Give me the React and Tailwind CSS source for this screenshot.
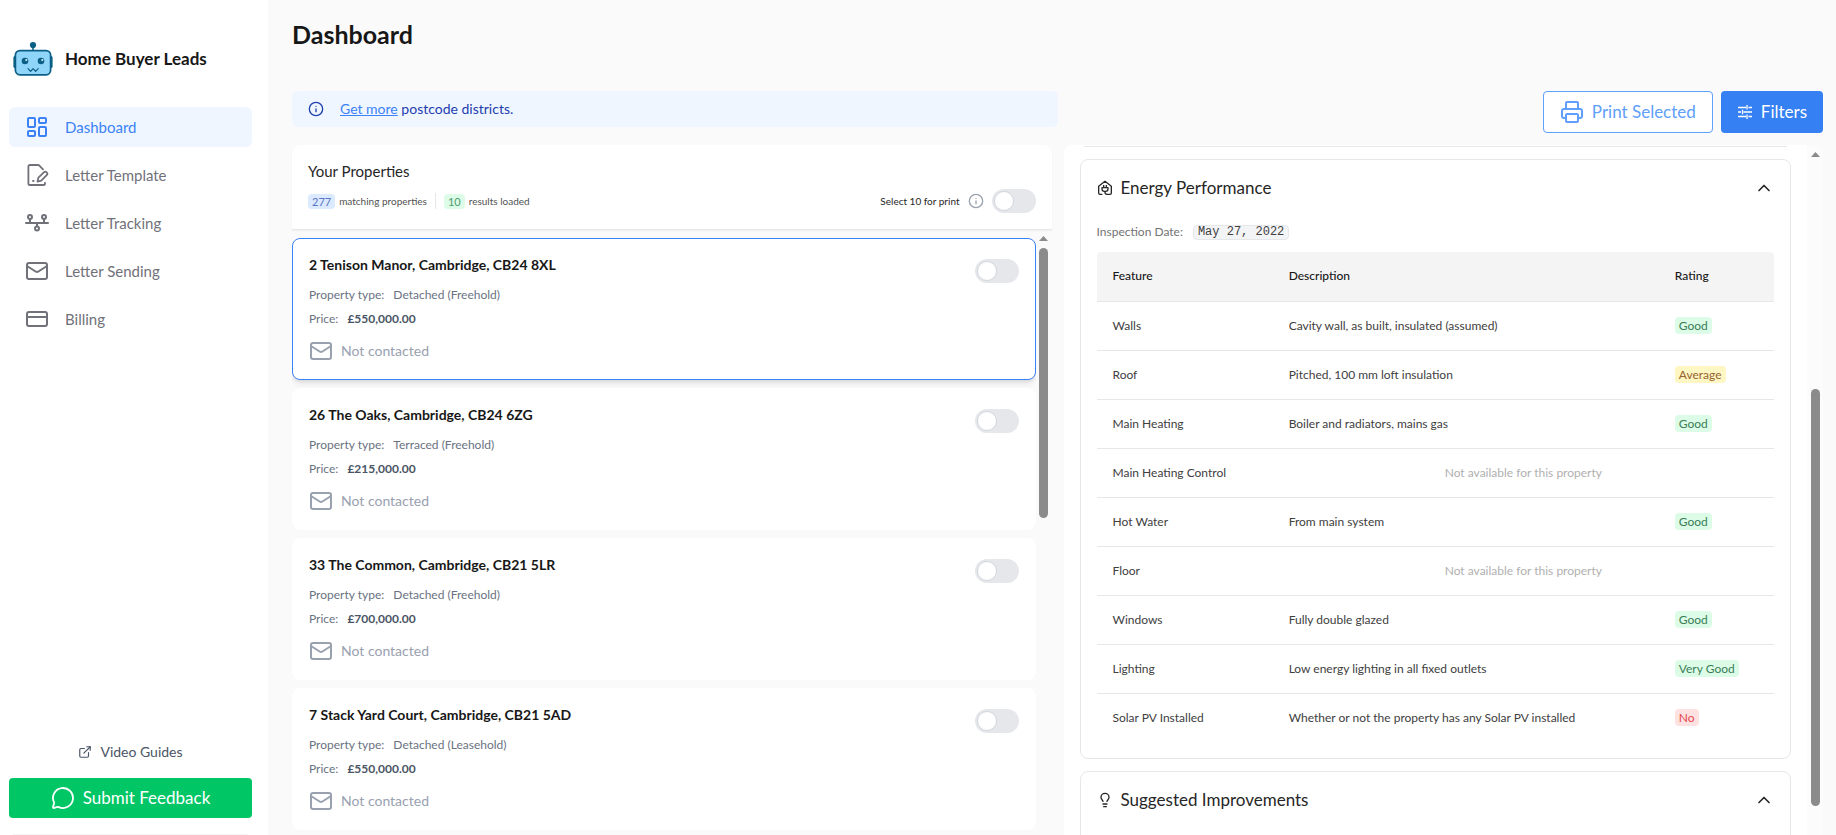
import {
  ChevronUp,
  CreditCard,
  ExternalLink,
  Info,
  LayoutDashboard,
  Lightbulb,
  Mail,
  MessageCircle,
  Printer,
} from 'lucide-react';

const properties = [
  { id: 1, address: '2 Tenison Manor, Cambridge, CB24 8XL', type: 'Detached (Freehold)', price: '£550,000.00' },
  { id: 2, address: '26 The Oaks, Cambridge, CB24 6ZG', type: 'Terraced (Freehold)', price: '£215,000.00' },
  { id: 3, address: '33 The Common, Cambridge, CB21 5LR', type: 'Detached (Freehold)', price: '£700,000.00' },
  { id: 4, address: '7 Stack Yard Court, Cambridge, CB21 5AD', type: 'Detached (Leasehold)', price: '£550,000.00' },
];

const features = [
  { name: 'Walls', description: 'Cavity wall, as built, insulated (assumed)', rating: 'Good' },
  { name: 'Roof', description: 'Pitched, 100 mm loft insulation', rating: 'Average' },
  { name: 'Main Heating', description: 'Boiler and radiators, mains gas', rating: 'Good' },
  { name: 'Main Heating Control' },
  { name: 'Hot Water', description: 'From main system', rating: 'Good' },
  { name: 'Floor' },
  { name: 'Windows', description: 'Fully double glazed', rating: 'Good' },
  { name: 'Lighting', description: 'Low energy lighting in all fixed outlets', rating: 'Very Good' },
  { name: 'Solar PV Installed', description: 'Whether or not the property has any Solar PV installed', rating: 'No' },
];

const ratingStyles = {
  Good: 'bg-[#dcfce7] text-[#3a7d57]',
  'Very Good': 'bg-[#dcfce7] text-[#3a7d57]',
  Average: 'bg-[#fef6c3] text-[#95632f]',
  No: 'bg-[#fee2e2] text-[#e5484d]',
};

function RobotLogo() {
  return (
    <svg viewBox="0 0 40 36" className="h-9 w-10" fill="none" aria-hidden="true">
      <path d="M20 4v5" stroke="#0b5f86" strokeWidth="1.6" />
      <circle cx="20" cy="4" r="3.1" fill="#0b5f86" />
      <rect x="0.4" y="15" width="4" height="12" rx="1.6" fill="#0b5f86" />
      <rect x="35.6" y="15" width="4" height="12" rx="1.6" fill="#0b5f86" />
      <rect x="2.4" y="9.6" width="35.2" height="24.2" rx="4.5" fill="#8fd4f9" stroke="#0b5f86" strokeWidth="1.7" />
      <circle cx="12" cy="20" r="3.3" fill="#0b5f86" />
      <circle cx="28" cy="20" r="3.3" fill="#0b5f86" />
      <circle cx="13.3" cy="19" r="1.1" fill="#d8f1ff" />
      <circle cx="29.3" cy="19" r="1.1" fill="#d8f1ff" />
      <path d="M15 27.6l2.6 2.7 2.5-2.7 2.5 2.7 2.6-2.7" stroke="#0b5f86" strokeWidth="1.2" strokeLinecap="round" strokeLinejoin="round" />
    </svg>
  );
}

function TemplateIcon() {
  return (
    <svg viewBox="0 0 24 24" className="size-6" fill="none" stroke="currentColor" strokeWidth="1.8" strokeLinecap="round" strokeLinejoin="round" aria-hidden="true">
      <path d="M18 6.4 14.4 2.6a2 2 0 0 0-1.4-.6H5a1.6 1.6 0 0 0-1.6 1.6v16.8A1.6 1.6 0 0 0 5 22h13.4a1.6 1.6 0 0 0 1.6-1.6v-.6" />
      <path d="m13.4 14.6 5.4-5.2a2 2 0 0 1 2.9 2.8l-5.4 5.4-3.8 1z" />
      <path d="M8 18h.6" />
    </svg>
  );
}

function TrackingIcon() {
  return (
    <svg viewBox="0 0 24 24" className="size-6" fill="none" stroke="currentColor" strokeWidth="2" strokeLinecap="round" aria-hidden="true">
      <path d="M1 12h22M5 8v4M19 8v4M12 12v3" />
      <circle cx="5" cy="6" r="2" />
      <circle cx="19" cy="6" r="2" />
      <circle cx="12" cy="17.4" r="2" />
    </svg>
  );
}

function EnergyIcon() {
  return (
    <svg viewBox="0 0 24 24" className="size-4" fill="none" stroke="currentColor" strokeWidth="2" strokeLinejoin="round" aria-hidden="true">
      <path d="M8 21.5H4.5a2 2 0 0 1-2-2V9.5L12 2l9.5 7.500v10a2 2 0 0 1-2 2H15a3 3 0 0 1-3-3V17" />
      <path d="M7.500 11.500h9v2a3.500 3.500 0 0 1-3.500 3.500h-2a3.500 3.500 0 0 1-3.500-3.500zM10 7.500v4M14 7.500v4" />
    </svg>
  );
}

function FiltersIcon() {
  return (
    <svg viewBox="0 0 16 16" className="size-4" fill="none" stroke="currentColor" strokeWidth="1.3" aria-hidden="true">
      <path d="M1 3.500h8M11.500 3.500H15M10 1v4.500M1 8h3M6.500 8H15M5.500 5.800v4.400M1 12.500h8M11.500 12.500H15M10 10.500V15" />
    </svg>
  );
}

const navItems = [
  { label: 'Dashboard', icon: LayoutDashboard, active: true },
  { label: 'Letter Template', icon: TemplateIcon },
  { label: 'Letter Tracking', icon: TrackingIcon },
  { label: 'Letter Sending', icon: Mail },
  { label: 'Billing', icon: CreditCard },
];

function Toggle({ id, label }) {
  return (
    <input
      id={id}
      type="checkbox"
      role="switch"
      aria-label={label}
      className="h-6 w-11 shrink-0 cursor-pointer appearance-none rounded-full bg-gray-200 p-0.5 before:block before:size-5 before:rounded-full before:border before:border-gray-300 before:bg-white checked:bg-blue-500 checked:before:ml-5"
    />
  );
}

function ScrollArrow() {
  return (
    <svg viewBox="0 0 9 5" className="h-[5px] w-[9px] shrink-0" fill="#8b8b8b">
      <path d="M4.500 0 9 5H0z" />
    </svg>
  );
}

function Sidebar() {
  return (
    <aside className="flex w-[268px] shrink-0 flex-col bg-white pt-10 pr-4 pl-[9px]">
      <div className="mb-[29px] flex h-[38px] items-center gap-3 pl-1">
        <RobotLogo />
        <span className="text-[17px] font-bold text-neutral-900">Home Buyer Leads</span>
      </div>
      <nav className="flex flex-col gap-2">
        {navItems.map(({ label, icon: Icon, active }) => (
          <a
            key={label}
            href="#"
            className={`flex h-10 items-center gap-4 rounded-md px-4 text-[15px] ${
              active ? 'bg-[#eff6ff] text-[#3b82f6]' : 'text-[#71717a]'
            }`}
          >
            <Icon />
            {label}
          </a>
        ))}
      </nav>
      <div className="mt-auto flex flex-col pb-4">
        <a href="#" className="mb-3.5 flex h-6 items-center justify-center gap-2 text-sm text-gray-600">
          <ExternalLink className="size-3.5" />
          Video Guides
        </a>
        <button className="flex h-10 items-center justify-center gap-2 rounded-sm bg-[#00c666] text-[17px] text-white">
          <MessageCircle className="size-6" strokeWidth={1.8} />
          Submit Feedback
        </button>
      </div>
      <div className="mx-1 h-px shrink-0 bg-neutral-100" />
    </aside>
  );
}

function PropertyCard({ property, selected }) {
  return (
    <article
      className={`flex items-start justify-between rounded-lg border bg-white p-4 ${
        selected ? 'border-[#3b82f6] shadow-md' : 'border-white'
      }`}
    >
      <div>
        <h3 className="text-sm leading-5 font-bold text-neutral-900">{property.address}</h3>
        <div className="mt-2 text-xs leading-6 text-gray-500">
          <p>
            Property type: <span className="ml-1.5">{property.type}</span>
          </p>
          <p>
            Price: <span className="ml-1.5 font-bold text-gray-600">{property.price}</span>
          </p>
        </div>
        <p className="mt-2 flex h-6 items-center gap-2 text-sm text-gray-400">
          <Mail />
          Not contacted
        </p>
      </div>
      <div className="flex pt-1">
        <Toggle id={`print-${property.id}`} label={`Select ${property.address}`} />
      </div>
    </article>
  );
}

function PropertyList() {
  return (
    <section className="flex min-h-0 flex-col">
      <div className="z-10 rounded-t-lg border-b border-gray-200 bg-white p-4 shadow-xs">
        <h2 className="text-[15px] leading-5 text-neutral-800">Your Properties</h2>
        <div className="mt-2 flex h-6 items-center text-[10px] text-neutral-600">
          <span className="rounded-sm bg-[#dbeafe] px-1 text-[11px] leading-[15px] text-[#5a74c4]">277</span>
          <span className="ml-1">matching properties</span>
          <span className="mx-2 h-4 w-px bg-gray-200" />
          <span className="rounded-sm bg-[#dcfce7] px-1 text-[11px] leading-[15px] text-[#4f9a6d]">10</span>
          <span className="ml-1">results loaded</span>
          <label htmlFor="print-all" className="ml-auto text-neutral-800">
            Select 10 for print
          </label>
          <Info className="mx-2 size-4 text-gray-400" />
          <Toggle id="print-all" label="Select 10 for print" />
        </div>
      </div>
      <div className="flex min-h-0 flex-1">
        <div className="flex min-w-0 flex-1 flex-col gap-2 overflow-hidden pt-2">
          {properties.map((property, i) => (
            <PropertyCard key={property.id} property={property} selected={i === 0} />
          ))}
        </div>
        <div className="flex w-4 flex-col items-center gap-[7px] pt-1.5" aria-hidden="true">
          <ScrollArrow />
          <div className="h-[45%] w-[9px] rounded-full bg-[#8b8b8b]" />
        </div>
      </div>
    </section>
  );
}

function DetailCard({ icon, title, children }) {
  return (
    <section className="mt-3 shrink-0 rounded-lg border border-gray-200 p-4">
      <button className="flex h-6 w-full items-center gap-2 text-[17px] text-neutral-800">
        {icon}
        {title}
        <ChevronUp className="ml-auto size-5" />
      </button>
      {children}
    </section>
  );
}

function EnergyTable() {
  return (
    <div className="mt-2 overflow-hidden rounded-t-sm">
      <table className="w-full table-fixed text-left text-xs text-neutral-700">
        <thead>
          <tr className="h-[49px] border-b border-gray-200 bg-[#f4f4f4] text-neutral-900">
            <th className="w-[26%] px-4 font-medium">Feature</th>
            <th className="w-[57%] px-4 font-medium">Description</th>
            <th className="w-[17%] px-4 font-medium">Rating</th>
          </tr>
        </thead>
        <tbody>
          {features.map((feature) => (
            <tr key={feature.name} className="h-[49px] border-b border-gray-200 last:border-0">
              <td className="px-4">{feature.name}</td>
              {feature.rating ? (
                <>
                  <td className="px-4">{feature.description}</td>
                  <td className="px-4">
                    <span className={`rounded-sm px-1 py-px ${ratingStyles[feature.rating]}`}>{feature.rating}</span>
                  </td>
                </>
              ) : (
                <td colSpan={2} className="px-4 text-center text-[#b0b0b0]">
                  Not available for this property
                </td>
              )}
            </tr>
          ))}
        </tbody>
      </table>
    </div>
  );
}

function PropertyDetails() {
  return (
    <section className="flex min-h-0 overflow-hidden rounded-t-lg bg-white">
      <div className="flex min-w-0 flex-1 flex-col px-4">
        <div className="mx-1 h-0.5 shrink-0 border-b border-gray-200" />
        <DetailCard icon={<EnergyIcon />} title="Energy Performance">
          <p className="mt-5 flex h-6 items-center gap-2.5 text-xs text-neutral-500">
            Inspection Date:
            <span className="rounded-sm border border-gray-200 bg-gray-100 px-1 font-['Liberation_Mono',monospace] leading-[13px] text-neutral-700">
              May 27, 2022
            </span>
          </p>
          <EnergyTable />
        </DetailCard>
        <DetailCard icon={<Lightbulb className="size-4" />} title="Suggested Improvements">
          <div className="h-24" />
        </DetailCard>
      </div>
      <div className="flex w-4 flex-col items-center bg-[#fcfcfc] pt-[7px]" aria-hidden="true">
        <ScrollArrow />
        <div className="h-[34%]" />
        <div className="h-[61%] w-[9px] rounded-full bg-[#8b8b8b]" />
      </div>
    </section>
  );
}

export default function App() {
  return (
    <div className="flex h-screen overflow-hidden bg-[#fafafa] font-['Lato',sans-serif]">
      <Sidebar />
      <main className="flex min-w-0 flex-1 flex-col pt-4 pr-[13px] pl-6">
        <h1 className="mb-[39px] text-[25px] leading-9 font-bold text-neutral-900">Dashboard</h1>
        <div className="mb-3 flex items-start justify-between">
          <p className="flex h-9 w-1/2 items-center rounded-md bg-[#eff6ff] px-4 text-sm text-[#1e40af]">
            <Info className="mr-4 size-4" />
            <span>
              <a href="#" className="text-[#3b82f6] underline">
                Get more
              </a>{' '}
              postcode districts.
            </span>
          </p>
          <div className="flex gap-2 text-[17px]">
            <button className="flex h-[42px] items-center gap-2 rounded-sm border border-[#60a0fa] bg-white px-4 text-[#60a0fa]">
              <Printer />
              Print Selected
            </button>
            <button className="flex h-[42px] items-center gap-2 rounded-sm bg-[#3580f2] px-4 text-white">
              <FiltersIcon />
              Filters
            </button>
          </div>
        </div>
        <div className="grid min-h-0 flex-1 grid-cols-2 grid-rows-1 gap-3">
          <PropertyList />
          <PropertyDetails />
        </div>
      </main>
    </div>
  );
}
